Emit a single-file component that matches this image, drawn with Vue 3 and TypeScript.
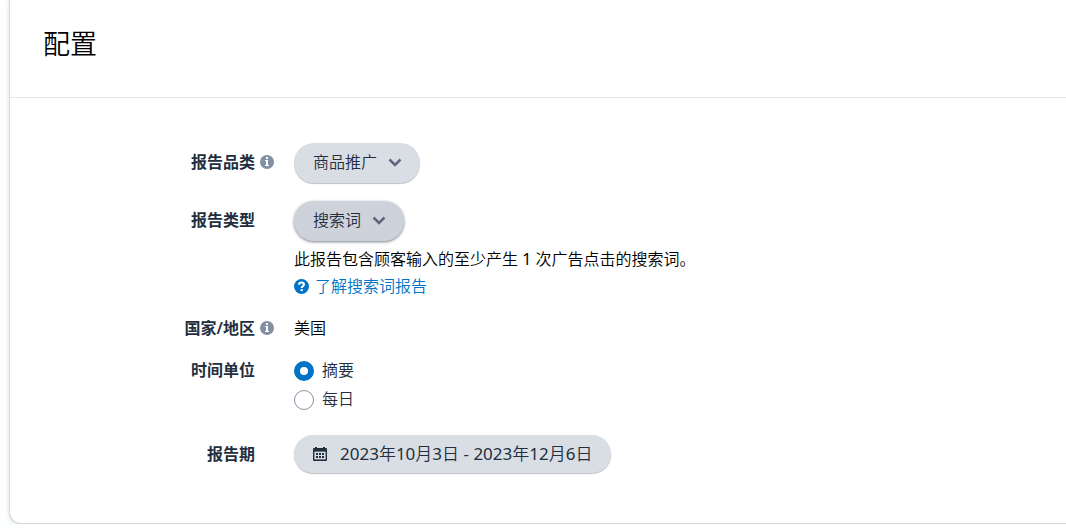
<script setup lang="ts">
import { ref } from 'vue'

const category = ref('商品推广')
const reportType = ref('搜索词')
const unit = ref('摘要')
const units: string[] = ['摘要', '每日']
</script>

<template>
  <main class="card">
    <header class="head">
      <h1>配置</h1>
    </header>
    <form class="rows" @submit.prevent>
      <div class="row">
        <div class="label tall">
          <label for="category">报告品类</label>
          <span class="slot">
            <svg class="info" viewBox="0 0 14 14" aria-hidden="true">
              <circle cx="7" cy="7" r="7" fill="#8290a5" />
              <path d="M6 2h2v2H6zM5 5h3v5h1v1H5v-1h1V6H5z" fill="#fff" />
            </svg>
          </span>
        </div>
        <div class="pick">
          <select id="category" v-model="category">
            <option>商品推广</option>
          </select>
          <svg class="chevron" viewBox="0 0 14 9" aria-hidden="true">
            <path d="M1.5 1.5 7 7l5.5-5.5" />
          </svg>
        </div>
      </div>

      <div class="row">
        <div class="label tall">
          <label for="type">报告类型</label>
          <span class="slot"></span>
        </div>
        <div>
          <div class="pick active">
            <select id="type" v-model="reportType">
              <option>搜索词</option>
            </select>
            <svg class="chevron" viewBox="0 0 14 9" aria-hidden="true">
              <path d="M1.5 1.5 7 7l5.5-5.5" />
            </svg>
          </div>
          <p class="note">此报告包含顾客输入的至少产生 1 次广告点击的搜索词。</p>
          <a class="help" href="#">
            <svg viewBox="0 0 14 14" aria-hidden="true">
              <circle cx="7" cy="7" r="7" fill="#0073c7" />
              <path d="M4.7 5.3C4.7 3.9 5.7 3.2 7 3.2s2.3.7 2.3 1.9c0 1.5-2.1 1.6-2.1 3.2" fill="none" stroke="#fff" stroke-width="1.9" />
              <path d="M6.2 9.4h2v1.9h-2z" fill="#fff" />
            </svg>
            <span>了解搜索词报告</span>
          </a>
        </div>
      </div>

      <div class="row">
        <div class="label">
          <span>国家/地区</span>
          <span class="slot">
            <svg class="info" viewBox="0 0 14 14" aria-hidden="true">
              <circle cx="7" cy="7" r="7" fill="#8290a5" />
              <path d="M6 2h2v2H6zM5 5h3v5h1v1H5v-1h1V6H5z" fill="#fff" />
            </svg>
          </span>
        </div>
        <div class="country">美国</div>
      </div>

      <div class="row">
        <div class="label unit">
          <span id="unit-label">时间单位</span>
          <span class="slot"></span>
        </div>
        <div role="radiogroup" aria-labelledby="unit-label">
          <label v-for="u in units" :key="u" class="radio">
            <input v-model="unit" type="radio" name="unit" :value="u" />
            <span>{{ u }}</span>
          </label>
        </div>
      </div>

      <div class="row period">
        <div class="label tall">
          <label for="period">报告期</label>
          <span class="slot"></span>
        </div>
        <button id="period" type="button" class="date">
          <svg viewBox="0 0 14 14" aria-hidden="true">
            <path d="M2 0h2v1h6V0h2v1h1q1 0 1 1v11q0 1-1 1H1q-1 0-1-1V2q0-1 1-1h1z" fill="#232f3e" />
            <path d="M1.4 4.6h11.2v7.8H1.4z" fill="#d9dde4" />
            <path d="M3 6h2v2H3zM6 6h2v2H6zM9 6h2v2H9zM3 9h2v2H3zM6 9h2v2H6zM9 9h2v2H9z" fill="#232f3e" />
          </svg>
          <span>2023年10月3日 - 2023年12月6日</span>
        </button>
      </div>
    </form>
  </main>
</template>

<style>
body {
  margin: 0;
  background: #fdfefe;
}
</style>

<style scoped>
.card {
  margin-left: 9px;
  background: #fff;
  border: 1px solid #d5d9da;
  border-width: 0 0 1px 1px;
  border-bottom-left-radius: 12px;
  box-shadow: 0 1px 4px rgba(35, 47, 62, 0.16);
  font: 400 16px/20px "Noto Sans", "Noto Sans CJK SC DemiLight", "Noto Sans CJK SC", sans-serif;
  color: #000;
}
.head {
  padding: 24px 33px 33px;
  border-bottom: 1px solid #e7e9e9;
}
h1 {
  margin: 0;
  font-size: 27px;
  line-height: 40px;
  font-weight: 350;
}
.rows {
  display: flex;
  flex-direction: column;
  gap: 18px;
  padding: 45px 20px 50px 0;
}
.row {
  display: grid;
  grid-template-columns: 264px minmax(0, 1fr);
  column-gap: 20px;
  align-items: start;
}
.label {
  display: flex;
  justify-content: flex-end;
  align-items: center;
  color: #232f3e;
  font-family: "Noto Sans", "Noto Sans CJK SC", sans-serif;
  font-weight: 600;
}
.tall {
  line-height: 38px;
}
.slot {
  display: flex;
  justify-content: flex-end;
  width: 19px;
}
.info {
  width: 14px;
  height: 14px;
}
.pick {
  position: relative;
  display: flex;
  width: fit-content;
}
select,
.date {
  appearance: none;
  border: 0;
  border-radius: 20px;
  background: #d9dde4;
  box-shadow: 0 1px 1px rgba(35, 47, 62, 0.3);
  color: #232f3e;
  font: inherit;
  cursor: pointer;
}
select {
  height: 40px;
  padding: 0 42px 2px 19px;
}
.active select {
  background: #ced2db;
  box-shadow: 0 1px 3px rgba(35, 47, 62, 0.6);
}
.chevron {
  position: absolute;
  right: 18px;
  top: 15px;
  width: 14px;
  height: 9px;
  fill: none;
  stroke: #5c697c;
  stroke-width: 2.5;
  pointer-events: none;
}
.note {
  margin: 5px 0 0;
  line-height: 27px;
}
.help {
  display: flex;
  align-items: center;
  gap: 6px;
  width: fit-content;
  line-height: 27px;
  color: #0073c7;
  text-decoration: none;
}
.help svg {
  width: 15px;
  height: 15px;
}
.unit {
  line-height: 29px;
}
.radio {
  display: flex;
  align-items: center;
  gap: 8px;
  width: fit-content;
  line-height: 29px;
  color: #232f3e;
}
.radio input {
  appearance: none;
  box-sizing: border-box;
  width: 20px;
  height: 20px;
  margin: 0;
  border: 1px solid #8290a5;
  border-radius: 50%;
  background: #fff;
}
.radio input:checked {
  border: 6px solid #0073c7;
}
.period {
  margin-top: 3px;
}
.date {
  display: flex;
  align-items: center;
  gap: 13px;
  width: fit-content;
  height: 38px;
  padding: 0 19px;
  font-size: 17px;
}
.date svg {
  width: 14px;
  height: 14px;
}
</style>
